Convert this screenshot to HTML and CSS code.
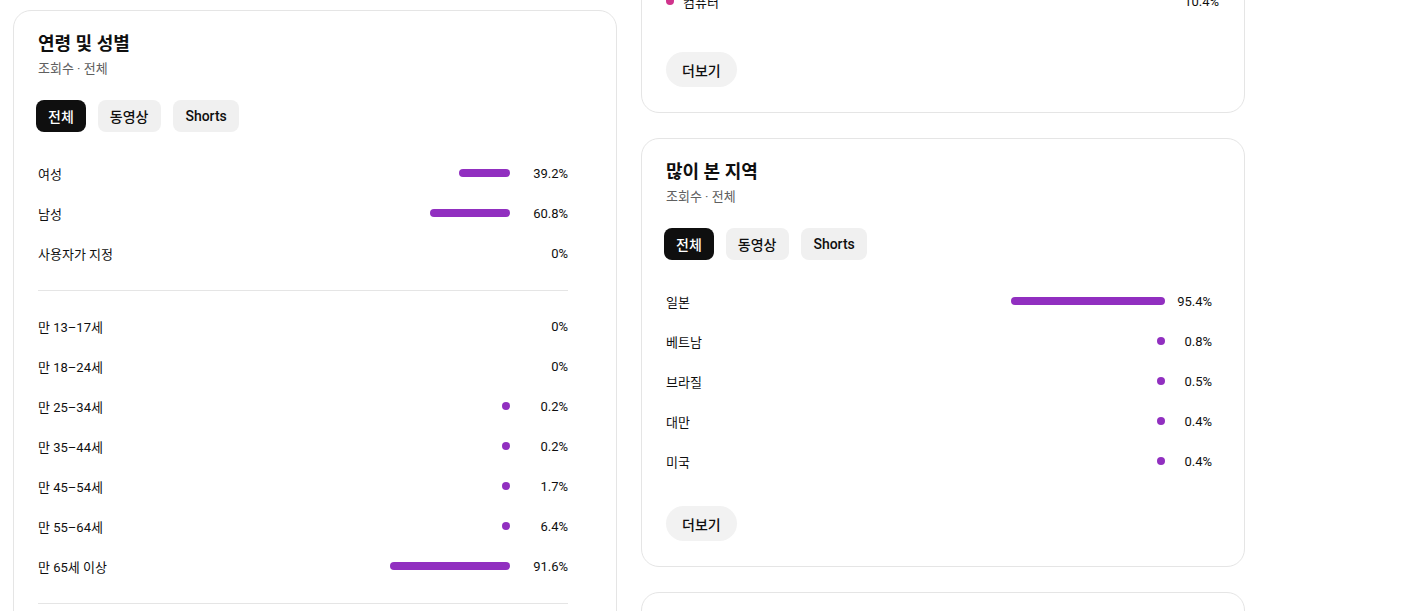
FILE: index.html
```html
<!DOCTYPE html>
<html lang="ko">
<head>
<meta charset="utf-8">
<title>분석</title>
<link rel="stylesheet" href="styles.css">
</head>
<body>
<div class="page">
  <div class="col col-left">
    <section class="card card-wide">
      <h2 class="card-title">연령 및 성별</h2>
      <div class="card-sub">조회수 · 전체</div>
      <div class="tabs">
        <button class="tab active">전체</button>
        <button class="tab">동영상</button>
        <button class="tab">Shorts</button>
      </div>
      <div class="rows">
        <div class="row"><span class="label">여성</span><span class="track"><span class="bar" style="width:51px"></span></span><span class="pct">39.2%</span></div>
        <div class="row"><span class="label">남성</span><span class="track"><span class="bar" style="width:80px"></span></span><span class="pct">60.8%</span></div>
        <div class="row"><span class="label">사용자가 지정</span><span class="track"></span><span class="pct">0%</span></div>
      </div>
      <hr class="sep">
      <div class="rows">
        <div class="row"><span class="label">만 13–17세</span><span class="track"></span><span class="pct">0%</span></div>
        <div class="row"><span class="label">만 18–24세</span><span class="track"></span><span class="pct">0%</span></div>
        <div class="row"><span class="label">만 25–34세</span><span class="track"><span class="bar" style="width:8px"></span></span><span class="pct">0.2%</span></div>
        <div class="row"><span class="label">만 35–44세</span><span class="track"><span class="bar" style="width:8px"></span></span><span class="pct">0.2%</span></div>
        <div class="row"><span class="label">만 45–54세</span><span class="track"><span class="bar" style="width:8px"></span></span><span class="pct">1.7%</span></div>
        <div class="row"><span class="label">만 55–64세</span><span class="track"><span class="bar" style="width:8px"></span></span><span class="pct">6.4%</span></div>
        <div class="row"><span class="label">만 65세 이상</span><span class="track"><span class="bar" style="width:120px"></span></span><span class="pct">91.6%</span></div>
      </div>
      <hr class="sep">
      <div class="rows">
        <div class="row"><span class="label">&nbsp;</span></div>
      </div>
    </section>
  </div>

  <div class="col col-right">
    <section class="card card-narrow">
      <div class="legend">
        <div class="legend-row"><span class="dot dot-blue"></span><span class="label">휴대전화</span><span class="lpct">71.2%</span></div>
        <div class="legend-row"><span class="dot dot-teal"></span><span class="label">TV</span><span class="lpct">15.1%</span></div>
        <div class="legend-row"><span class="dot dot-orange"></span><span class="label">태블릿</span><span class="lpct">3.3%</span></div>
        <div class="legend-row"><span class="dot dot-pink"></span><span class="label">컴퓨터</span><span class="lpct">10.4%</span></div>
      </div>
      <button class="more more-top">더보기</button>
    </section>

    <section class="card card-narrow">
      <h2 class="card-title">많이 본 지역</h2>
      <div class="card-sub">조회수 · 전체</div>
      <div class="tabs">
        <button class="tab active">전체</button>
        <button class="tab">동영상</button>
        <button class="tab">Shorts</button>
      </div>
      <div class="rows">
        <div class="row"><span class="label">일본</span><span class="track"><span class="bar" style="width:154px"></span></span><span class="pct">95.4%</span></div>
        <div class="row"><span class="label">베트남</span><span class="track"><span class="bar" style="width:8px"></span></span><span class="pct">0.8%</span></div>
        <div class="row"><span class="label">브라질</span><span class="track"><span class="bar" style="width:8px"></span></span><span class="pct">0.5%</span></div>
        <div class="row"><span class="label">대만</span><span class="track"><span class="bar" style="width:8px"></span></span><span class="pct">0.4%</span></div>
        <div class="row"><span class="label">미국</span><span class="track"><span class="bar" style="width:8px"></span></span><span class="pct">0.4%</span></div>
      </div>
      <button class="more">더보기</button>
    </section>

    <section class="card card-narrow card-stub"></section>
  </div>
</div>
</body>
</html>
```

FILE: styles.css
```css
* { box-sizing: border-box; }

html, body {
  margin: 0;
  padding: 0;
  background: #ffffff;
  overflow: hidden;
}

body {
  font-family: Roboto, "Noto Sans CJK KR", "Noto Sans", sans-serif;
  color: #0f0f0f;
  font-size: 13px;
}

.page {
  display: flex;
  align-items: flex-start;
  gap: 24px;
  padding: 10px 0 0 13px;
}

.col {
  display: flex;
  flex-direction: column;
  gap: 25px;
  width: 604px;
}

.col-right {
  margin-top: -114px;
}

.card {
  border: 1px solid #e5e5e5;
  border-radius: 18px;
  padding: 20px 24px 25px 24px;
  background: #fff;
}

.card-wide { padding-right: 48px; }
.card-narrow { padding-right: 32px; }

.card-title {
  margin: 0;
  font-size: 18px;
  line-height: 26px;
  font-weight: 700;
}

.card-sub {
  font-size: 13px;
  line-height: 20px;
  margin-top: 2px;
  color: #606060;
}

.tabs {
  display: flex;
  gap: 12px;
  margin: 21px 0 21px -2px;
}

.tab {
  font-family: inherit;
  border: 0;
  height: 32px;
  padding: 0 12px;
  border-radius: 8px;
  background: #f0f0f0;
  color: #0f0f0f;
  font-size: 14px;
  font-weight: 500;
  cursor: pointer;
}

.tab + .tab { padding-right: 13px; }
.tab + .tab + .tab { padding-right: 12px; }

.tab.active {
  background: #0f0f0f;
  color: #fff;
}

.row {
  display: flex;
  align-items: center;
  height: 40px;
}

.label {
  flex: 1;
  font-size: 13px;
}

.track {
  display: flex;
  justify-content: flex-end;
}

.bar {
  display: block;
  height: 8px;
  border-radius: 4px;
  background: #912fc0;
}

.pct {
  width: 58px;
  text-align: right;
  font-size: 13px;
}

.card-narrow .pct { width: 47px; }

.sep {
  border: 0;
  border-top: 1px solid #e5e5e5;
  margin: 17px 0 15px;
}

.legend {
  display: flex;
  flex-direction: column;
  margin-right: -7px;
}

.legend-row {
  display: flex;
  align-items: center;
  height: 24px;
  gap: 9px;
}

.lpct { font-size: 13px; }

.dot {
  width: 8px;
  height: 8px;
  border-radius: 50%;
}

.dot-blue { background: #3ea6ff; }
.dot-teal { background: #12b5a6; }
.dot-orange { background: #f09300; }
.dot-pink { background: #d0338c; }

.more {
  font-family: inherit;
  display: block;
  border: 0;
  height: 35px;
  padding: 0 16px;
  border-radius: 18px;
  background: #f2f2f2;
  color: #0f0f0f;
  font-size: 14px;
  font-weight: 500;
  margin-top: 25px;
  cursor: pointer;
}

.more-top { margin-top: 39px; }

.card-stub { height: 200px; }
```
